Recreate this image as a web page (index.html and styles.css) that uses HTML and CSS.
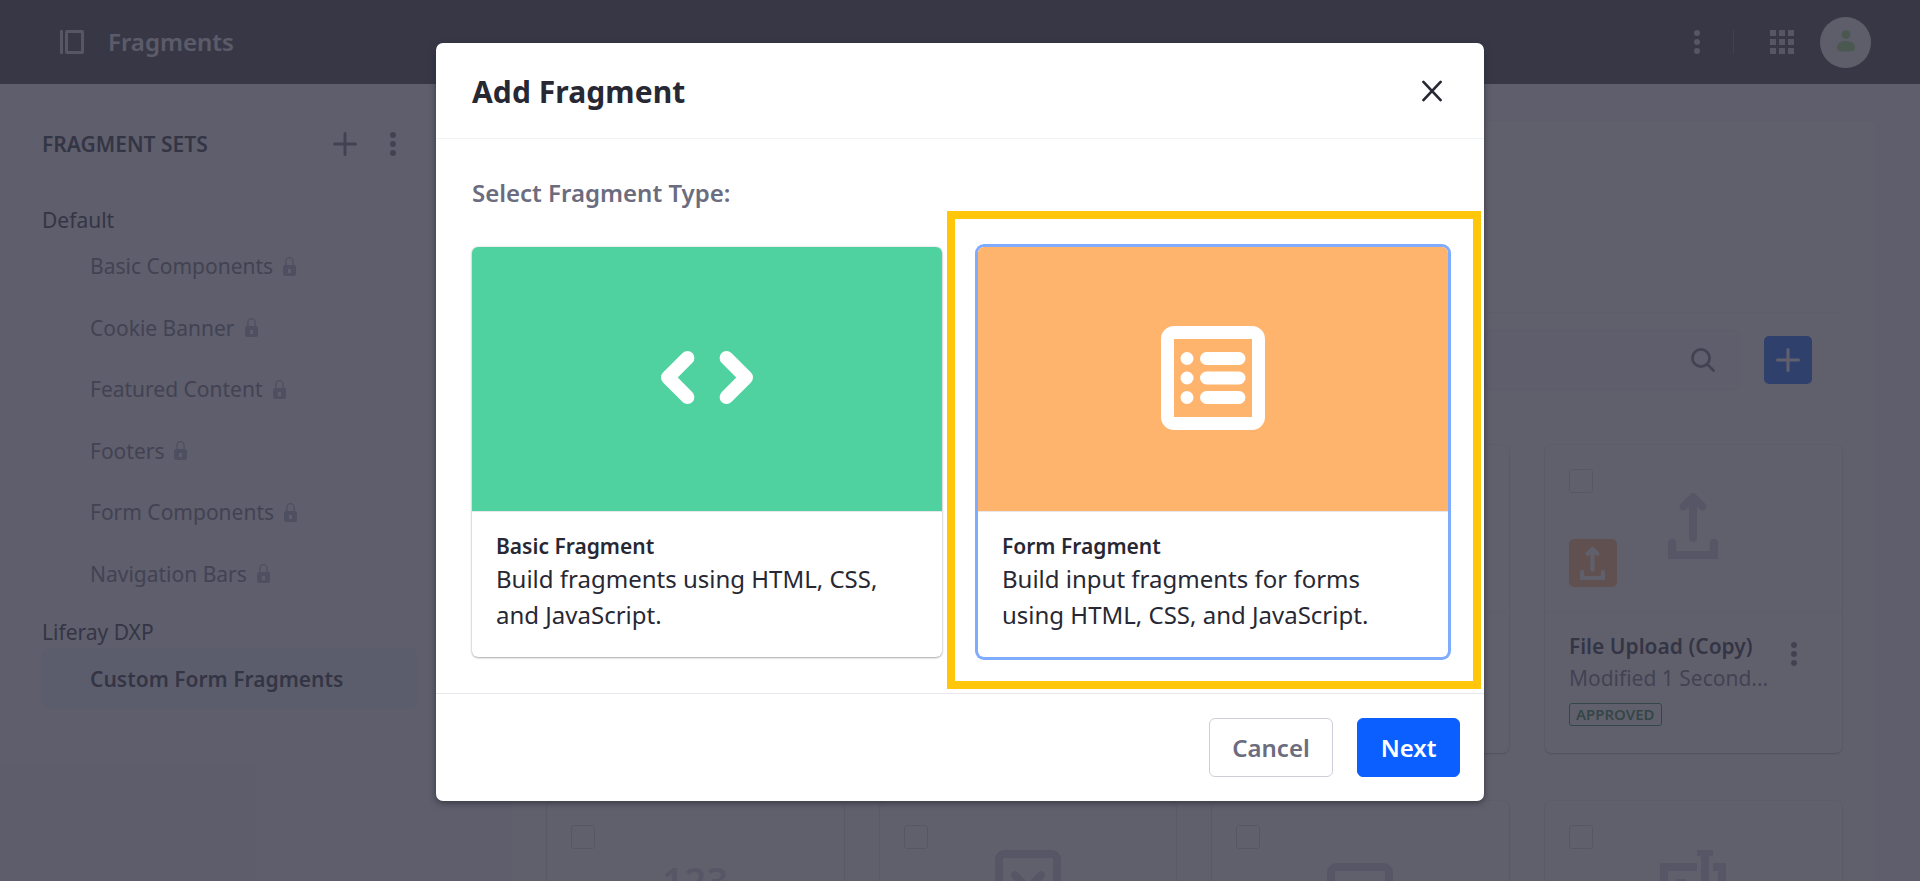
FILE: index.html
```html
<!DOCTYPE html>
<html lang="en">
<head>
<meta charset="utf-8">
<title>Fragments</title>
<link rel="stylesheet" href="styles.css">
</head>
<body>
<svg class="defs" aria-hidden="true">
  <symbol id="lock" viewBox="0 0 13 19"><path fill="currentColor" fill-rule="evenodd" d="M0 10a2 2 0 0 1 2-2h9a2 2 0 0 1 2 2v7a2 2 0 0 1-2 2H2a2 2 0 0 1-2-2zM5 12v4h3v-4z"/><path fill="none" stroke="currentColor" stroke-width="1.3" d="M2.900 8V4.300a3.600 3.600 0 0 1 7.200 0V8"/></symbol>
  <symbol id="plus" viewBox="0 0 24 24"><path fill="none" stroke="currentColor" stroke-width="3" stroke-linecap="round" d="M12 1.500v21M1.500 12h21"/></symbol>
  <symbol id="dots" viewBox="0 0 6 24"><circle cx="3" cy="3" r="3" fill="currentColor"/><circle cx="3" cy="12" r="3" fill="currentColor"/><circle cx="3" cy="21" r="3" fill="currentColor"/></symbol>
  <symbol id="upload" viewBox="0 0 50 66"><path fill="none" stroke="currentColor" stroke-width="8" stroke-linecap="round" stroke-linejoin="round" d="M25 45V5M15.500 13.500 25 4l9.500 9.500"/><path fill="currentColor" d="M19 13 25 4l6 9z"/><path fill="currentColor" d="M0 66V50a4 4 0 0 1 8.400 0v8h33.200v-8a4 4 0 0 1 8.400 0v16z"/></symbol>
</svg>
<div class="page">
  <header class="topbar">
    <svg class="panel-icon" viewBox="0 0 24 24"><rect width="3" height="24" rx="1.200"/><path fill-rule="evenodd" d="M7 0h15a2 2 0 0 1 2 2v20a2 2 0 0 1-2 2H7a2 2 0 0 1-2-2V2a2 2 0 0 1 2-2zm1 3v18h13V3z"/></svg>
    <h1 class="topbar-title">Fragments</h1>
    <svg class="dots topbar-dots"><use href="#dots"/></svg>
    <span class="divider"></span>
    <svg class="grid-icon" viewBox="0 0 24 24"><path d="M0 0h6v6H0zM9 0h6v6H9zM18 0h6v6h-6zM0 9h6v6H0zM9 9h6v6H9zM18 9h6v6h-6zM0 18h6v6H0zM9 18h6v6H9zM18 18h6v6h-6z"/></svg>
    <span class="avatar"><svg viewBox="0 0 18 22"><circle cx="9" cy="4.500" r="4.500"/><path d="M0 17.500C0 13 4 11 9 11s9 2 9 6.500c0 2.500-1.500 4-4 4H4c-2.500 0-4-1.500-4-4z"/></svg></span>
  </header>
  <div class="columns">
    <nav class="sidebar">
      <div class="sidebar-head"><h2>FRAGMENT SETS</h2><svg class="plus"><use href="#plus"/></svg><svg class="dots"><use href="#dots"/></svg></div>
      <h3 class="group">Default</h3>
      <ul class="sets">
        <li>Basic Components<svg class="lock"><use href="#lock"/></svg></li>
        <li>Cookie Banner<svg class="lock"><use href="#lock"/></svg></li>
        <li>Featured Content<svg class="lock"><use href="#lock"/></svg></li>
        <li>Footers<svg class="lock"><use href="#lock"/></svg></li>
        <li>Form Components<svg class="lock"><use href="#lock"/></svg></li>
        <li>Navigation Bars<svg class="lock"><use href="#lock"/></svg></li>
      </ul>
      <h3 class="group group-site">Liferay DXP</h3>
      <div class="selected-set">Custom Form Fragments</div>
    </nav>
    <main class="sheet">
      <div class="toolbar">
        <div class="search"><svg viewBox="0 0 24 24"><circle cx="10" cy="10" r="8.600"/><path d="m16.500 16.500 6 6"/></svg></div>
        <div class="add"><svg class="plus"><use href="#plus"/></svg></div>
      </div>
      <div class="cards">
        <article class="card"></article>
        <article class="card"></article>
        <article class="card"><div class="card-top"></div></article>
        <article class="card">
          <div class="card-top">
            <span class="check"></span>
            <svg class="upload-big"><use href="#upload"/></svg>
            <span class="sticker"><svg><use href="#upload"/></svg></span>
          </div>
          <div class="card-info">
            <div class="card-text"><strong>File Upload (Copy)</strong><span class="modified">Modified 1 Second...</span><span class="approved">APPROVED</span></div>
            <svg class="dots"><use href="#dots"/></svg>
          </div>
        </article>
        <article class="card"><div class="card-top"><span class="check"></span><span class="numeric">123</span></div></article>
        <article class="card"><div class="card-top"><span class="check"></span><svg class="art art-check" viewBox="0 0 66 66"><rect x="4" y="4" width="58" height="58" rx="5"/><path d="m20 25 13 14 13-14"/></svg></div></article>
        <article class="card"><div class="card-top"><span class="check"></span><svg class="art art-window" viewBox="0 0 66 54"><rect x="4" y="4" width="58" height="46" rx="5"/></svg></div></article>
        <article class="card"><div class="card-top"><span class="check"></span><svg class="art art-text" viewBox="0 0 66 66"><path d="M37 17H4v40h33M53 17h9v40h-9M45 0v66M37 2h16"/><path d="M16 33h10"/></svg></div></article>
      </div>
    </main>
  </div>
</div>
<div class="backdrop"></div>
<div class="modal-layer">
  <section class="modal" role="dialog" aria-label="Add Fragment">
    <header class="modal-header"><h2>Add Fragment</h2><svg class="close" viewBox="0 0 22 22"><path d="m1.500 1.500 18 19M19.500 1.500l-18 19"/></svg></header>
    <div class="modal-body">
      <h3>Select Fragment Type:</h3>
      <div class="types">
        <article class="type">
          <div class="type-art type-green"><svg class="code" viewBox="0 0 92 53"><path d="M26.500 6.900 6.900 26.500l19.600 19.600M65.500 6.900l19.600 19.600-19.600 19.600"/></svg></div>
          <div class="type-info"><h4>Basic Fragment</h4><p>Build fragments using HTML, CSS, and JavaScript.</p></div>
        </article>
        <article class="type type-selected">
          <div class="type-art type-orange"><svg class="form" viewBox="0 0 16 16"><path fill-rule="evenodd" d="M2 0h12a2 2 0 0 1 2 2v12a2 2 0 0 1-2 2H2a2 2 0 0 1-2-2V2a2 2 0 0 1 2-2zm0 2v12h12V2z"/><circle cx="4" cy="5" r="1"/><circle cx="4" cy="8" r="1"/><circle cx="4" cy="11" r="1"/><rect x="6" y="4" width="7" height="2" rx="1"/><rect x="6" y="7" width="7" height="2" rx="1"/><rect x="6" y="10" width="7" height="2" rx="1"/></svg></div>
          <div class="type-info"><h4>Form Fragment</h4><p>Build input fragments for forms using HTML, CSS, and JavaScript.</p></div>
        </article>
      </div>
    </div>
    <footer class="modal-footer"><button class="btn">Cancel</button><button class="btn btn-primary">Next</button></footer>
  </section>
  <div class="highlight"></div>
</div>
</body>
</html>
```

FILE: styles.css
```css
* { box-sizing: border-box; }
body { margin: 0; height: 881px; overflow: hidden; font-family: "Noto Sans", "Open Sans", sans-serif; color: #272833; }
h1, h2, h3, h4, p, ul { margin: 0; padding: 0; }
svg { display: block; flex: none; }
.defs { position: absolute; width: 0; height: 0; }
.page { height: 881px; overflow: hidden; background: #f4f3f8; }

.topbar { display: flex; align-items: center; height: 84px; padding: 0 49px 0 60px; background: #36353f; color: #e4e4e8; }
.panel-icon { width: 24px; height: 24px; fill: #cdcdd6; }
.topbar-title { flex: 1; margin-left: 24px; font-size: 24px; font-weight: 600; line-height: 36px; }
.dots { width: 6px; height: 24px; color: #6b6c7e; }
.topbar-dots { color: #cdcdd6; }
.divider { width: 1px; height: 24px; margin: 0 36px 0 33px; background: #65657a; }
.grid-icon { width: 24px; height: 24px; fill: #cdcdd6; }
.avatar { display: flex; align-items: center; justify-content: center; width: 51px; height: 51px; margin-left: 26px; border-radius: 50%; background: #f4f4f4; }
.avatar svg { width: 18px; height: 22px; fill: #94d878; margin-top: -2px; }

.columns { display: flex; align-items: flex-start; }
.sidebar { width: 460px; padding: 0 42px; flex: none; }
.sidebar-head { display: flex; align-items: center; height: 120px; padding-right: 22px; }
.sidebar-head h2 { flex: 1; font-size: 21px; font-weight: 600; white-space: nowrap; }
.sidebar-head .plus { width: 24px; height: 24px; margin-right: 33px; color: #6b6c7e; }
.group { font-size: 21px; font-weight: 400; line-height: 32px; }
.group-site { margin-top: 11px; }
.sets { list-style: none; margin-top: -.8px; padding: 0 0 0 48px; color: #6b6c7e; font-size: 21px; }
.sets li { display: flex; align-items: center; height: 61.600px; }
.lock { width: 13px; height: 19px; margin-left: 10px; color: #a7a9bc; }
.selected-set { width: 375px; height: 61px; padding-left: 48px; border-radius: 6px; background: #ebf0fb; font-size: 21px; font-weight: 600; line-height: 62px; }

.sheet { flex: 1; height: 800px; margin: 36px 43px 0 50px; border: 1px solid #efeff4; border-radius: 6px; background: #fff; padding: 191px 34.500px 0 36px; }
.toolbar { display: flex; align-items: center; border-top: 1px solid #eeeef3; padding-top: 17px; }
.search { display: flex; align-items: center; justify-content: flex-end; flex: 1; height: 60px; padding-right: 24px; border: 1px solid #edeef4; border-radius: 6px; background: #f4f3f8; }
.search svg { width: 24px; height: 24px; fill: none; stroke: #6b6c7e; stroke-width: 2.800; stroke-linecap: round; }
.add { display: grid; place-items: center; width: 48px; height: 48px; margin: 0 30px 0 24px; border-radius: 5px; background: #0b5fff; color: #fff; }
.add .plus { width: 24px; height: 24px; }
.cards { display: grid; grid-template-columns: repeat(4, 1fr); column-gap: 36px; row-gap: 48px; padding-top: 55px; }
.card { height: 308px; border-radius: 6px; background: #fff; box-shadow: 0 1px 3px -1px rgba(0,0,0,.6), 0 0 2px rgba(0,0,0,.15); }
.card-top { position: relative; height: 167px; border-bottom: 1px solid #eeeef3; color: #cdced9; }
.check { position: absolute; left: 24px; top: 24px; width: 24px; height: 24px; border: 1px solid #cdced9; border-radius: 3px; }
.upload-big { position: absolute; left: 123px; top: 48px; width: 50px; height: 66px; }
.sticker { position: absolute; left: 24px; top: 94px; display: grid; place-items: center; width: 48px; height: 48px; border-radius: 5px; background: #ffb46e; color: #fff; }
.sticker svg { width: 25px; height: 33px; margin-left: -1px; }
.card-info { display: flex; justify-content: space-between; padding: 18px 45px 0 24px; }
.card-info .dots { margin-top: 12px; }
.card-text { display: flex; flex-direction: column; align-items: flex-start; white-space: nowrap; font-size: 21px; line-height: 32px; }
.card-text strong { font-weight: 600; }
.modified { color: #6b6c7e; }
.approved { height: 23px; margin-top: 9px; padding: 0 6px; border: 1px solid #287d3c; border-radius: 3px; color: #287d3c; font-size: 15px; font-weight: 600; line-height: 21px; }
.numeric { position: absolute; left: 115px; top: 51px; font-size: 38px; font-weight: 600; line-height: 56px; letter-spacing: .5px; }
.art { position: absolute; left: 115px; fill: none; stroke: #cdced9; stroke-width: 8; width: 66px; height: 66px; }
.art-check { top: 49px; stroke-linecap: round; stroke-linejoin: round; }
.art-window { top: 62px; height: 54px; }
.art-text { top: 49px; }

.backdrop { position: absolute; inset: 0; background: rgba(56,56,72,.8); }
.modal-layer { position: absolute; left: 436px; top: 43px; width: 1048px; }
.modal { height: 758px; display: flex; flex-direction: column; border-radius: 7px; background: #fff; box-shadow: 0 2px 6px rgba(39,40,51,.7); }
.modal-header { display: flex; align-items: center; justify-content: space-between; height: 96px; padding: 0 41px 0 36px; border-bottom: 1px solid #f1f2f5; }
.modal-header h2 { padding-top: 2px; font-size: 30px; font-weight: 700; line-height: 45px; letter-spacing: .08px; }
.close { width: 21px; height: 22px; fill: none; stroke: #272833; stroke-width: 2.800; stroke-linecap: round; }
.modal-body { height: 554px; padding: 36px 36px 0; }
.modal-body h3 { color: #6b6c7e; font-size: 24px; font-weight: 600; line-height: 36px; }
.types { display: flex; justify-content: space-between; margin-top: 36px; }
.type { width: 470px; height: 410px; overflow: hidden; border-radius: 6px; background: #fff; box-shadow: 0 1px 3px -1px rgba(0,0,0,.6), 0 0 2px rgba(0,0,0,.2); }
.type-selected { box-shadow: 0 0 0 3px #80acff; }
.type-art { display: grid; place-items: center; height: 265px; padding-bottom: 3px; border-bottom: 1px solid #e7e7ed; }
.type-green { background: #50d2a0; }
.type-orange { background: #ffb46e; }
.code { width: 92px; height: 53px; fill: none; stroke: #fff; stroke-width: 13.800; stroke-linecap: round; stroke-linejoin: round; }
.form { width: 104px; height: 104px; fill: #fff; }
.type-info { padding: 18px 24px; }
.type-info h4 { font-size: 21px; font-weight: 600; line-height: 32px; }
.type-info p { margin-top: -1px; font-size: 24px; line-height: 36px; }
.modal-footer { display: flex; align-items: center; justify-content: flex-end; gap: 24px; height: 108px; padding-right: 24px; border-top: 1px solid #e7e7ed; }
.btn { height: 59px; padding: 0 22.500px; border: 1px solid #cdced9; border-radius: 6px; background: #fff; color: #6b6c7e; font: 600 24px "Noto Sans", sans-serif; }
.btn-primary { border-color: #0b5fff; background: #0b5fff; color: #fff; }
.highlight { position: absolute; left: 511px; top: 168px; width: 534px; height: 478px; border: 8px solid #ffc60a; }
```
